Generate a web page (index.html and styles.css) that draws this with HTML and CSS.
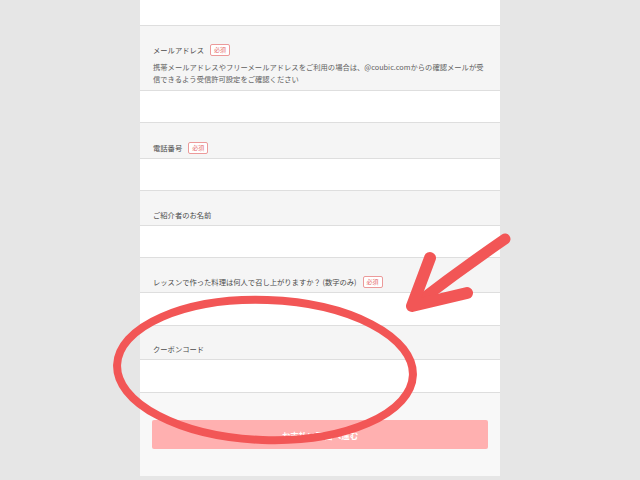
FILE: index.html
```html
<!DOCTYPE html>
<html lang="ja">
<head>
<meta charset="utf-8">
<link rel="stylesheet" href="styles.css">
</head>
<body>
<main class="panel">
  <div class="input-row input-row--top"></div>

  <div class="label-row label-row--desc">
    <div class="label-line"><span class="label">メールアドレス</span><span class="badge">必須</span></div>
    <p class="desc">携帯メールアドレスやフリーメールアドレスをご利用の場合は、@coubic.comからの確認メールが受信できるよう受信許可設定をご確認ください</p>
  </div>
  <div class="input-row"></div>

  <div class="label-row label-row--tall">
    <div class="label-line"><span class="label">電話番号</span><span class="badge">必須</span></div>
  </div>
  <div class="input-row"></div>

  <div class="label-row">
    <div class="label-line"><span class="label">ご紹介者のお名前</span></div>
  </div>
  <div class="input-row"></div>

  <div class="label-row">
    <div class="label-line"><span class="label">レッスンで作った料理は何人で召し上がりますか？ (数字のみ)</span><span class="badge">必須</span></div>
  </div>
  <div class="input-row input-row--tall"></div>

  <div class="label-row label-row--short">
    <div class="label-line"><span class="label">クーポンコード</span></div>
  </div>
  <div class="input-row input-row--tall"></div>

  <div class="footer">
    <button class="submit" type="button">お支払い画面へ進む</button>
  </div>
</main>

<svg class="annotation" width="640" height="480" viewBox="0 0 640 480" xmlns="http://www.w3.org/2000/svg">
  <ellipse cx="265" cy="370" rx="148" ry="70" transform="rotate(2 265 370)" fill="none" stroke="#f25656" stroke-width="8"/>
  <path d="M505 239 Q460 270 417 303" fill="none" stroke="#f25656" stroke-width="11" stroke-linecap="round"/>
  <path d="M430 258 L412 306 L467 293" fill="none" stroke="#f25656" stroke-width="12" stroke-linecap="round" stroke-linejoin="round"/>
</svg>
</body>
</html>
```

FILE: styles.css
```css
html, body {
  margin: 0;
  padding: 0;
}

body {
  width: 640px;
  height: 480px;
  overflow: hidden;
  background: #e6e6e6;
  font-family: "Noto Sans CJK JP", "Noto Sans", sans-serif;
  position: relative;
}

.panel {
  width: 360px;
  margin: 0 auto;
  background: #ffffff;
  display: flex;
  flex-direction: column;
}

.input-row {
  height: 31px;
  background: #ffffff;
  border-bottom: 1px solid #dedede;
}

.input-row--top {
  height: 25px;
}

.input-row--tall {
  height: 32px;
}

.label-row {
  background: #f5f5f5;
  border-bottom: 1px solid #dedede;
  padding: 18px 13px 4px;
}

.label-row--tall {
  padding-top: 19px;
}

.label-row--short {
  padding-top: 17px;
}

.label-row--desc {
  padding-bottom: 5px;
}

.label-line {
  display: flex;
  align-items: center;
  gap: 6px;
  height: 12px;
}

.label {
  font-size: 7.3px;
  line-height: 12px;
  color: #4a4a4a;
  white-space: nowrap;
}

.badge {
  box-sizing: border-box;
  width: 20px;
  height: 12px;
  border: 1px solid #ec9a9a;
  border-radius: 2px;
  background: #fff;
  color: #e56a6a;
  font-size: 6px;
  line-height: 10px;
  text-align: center;
}

.desc {
  margin: 5px 0 0;
  font-size: 7.3px;
  line-height: 12px;
  color: #606060;
}

.footer {
  background: #f8f8f8;
  height: 83px;
  padding: 27px 12px 0;
  box-sizing: border-box;
}

.submit {
  display: block;
  width: 100%;
  height: 29px;
  border: none;
  border-radius: 2px;
  background: #ffb0b0;
  color: #ffffff;
  font-family: "Noto Sans CJK JP", "Noto Sans", sans-serif;
  font-size: 8.5px;
  font-weight: bold;
  padding: 0;
}

.annotation {
  position: absolute;
  left: 0;
  top: 0;
  pointer-events: none;
}
```
